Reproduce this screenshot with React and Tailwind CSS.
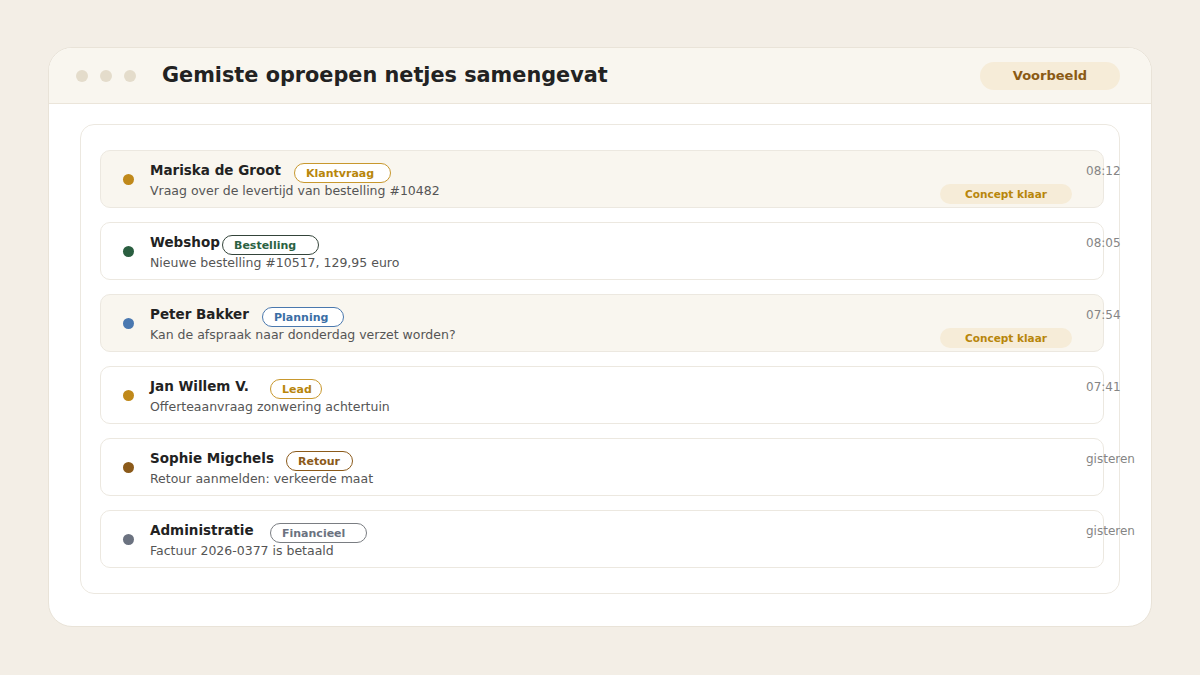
const calls = [
  {
    name: "Mariska de Groot",
    nameW: "w-[144px]",
    tag: "Klantvraag",
    tagW: "w-[97px]",
    tagCls: "border-[#c8982e] text-[#b8860b]",
    dot: "bg-[#c0891a]",
    text: "Vraag over de levertijd van bestelling #10482",
    time: "08:12",
    concept: true,
  },
  {
    name: "Webshop",
    nameW: "w-[72px]",
    tag: "Bestelling",
    tagW: "w-[97px]",
    tagCls: "border-[#34443a] text-[#2b6142]",
    dot: "bg-[#2a5e40]",
    text: "Nieuwe bestelling #10517, 129,95 euro",
    time: "08:05",
  },
  {
    name: "Peter Bakker",
    nameW: "w-[112px]",
    tag: "Planning",
    tagW: "w-[82px]",
    tagCls: "border-[#4a78ae] text-[#3a6ea5]",
    dot: "bg-[#4a78b0]",
    text: "Kan de afspraak naar donderdag verzet worden?",
    time: "07:54",
    concept: true,
  },
  {
    name: "Jan Willem V.",
    nameW: "w-[120px]",
    tag: "Lead",
    tagW: "w-[52px]",
    tagCls: "border-[#c8982e] text-[#b8860b]",
    dot: "bg-[#c0891a]",
    text: "Offerteaanvraag zonwering achtertuin",
    time: "07:41",
  },
  {
    name: "Sophie Migchels",
    nameW: "w-[136px]",
    tag: "Retour",
    tagW: "w-[67px]",
    tagCls: "border-[#8b5a1a] text-[#8b5a1a]",
    dot: "bg-[#8b5a1a]",
    text: "Retour aanmelden: verkeerde maat",
    time: "gisteren",
  },
  {
    name: "Administratie",
    nameW: "w-[120px]",
    tag: "Financieel",
    tagW: "w-[97px]",
    tagCls: "border-[#7a7d82] text-[#6b7280]",
    dot: "bg-[#6b7280]",
    text: "Factuur 2026-0377 is betaald",
    time: "gisteren",
  },
];

function CallRow({ call }) {
  return (
    <div
      className={`flex h-[58px] rounded-[10px] border border-[#ece8e0] pl-[22px] pr-[17px] ${
        call.concept ? "bg-[#f9f6ef]" : "bg-white"
      }`}
    >
      <span className={`self-center w-[11px] h-[11px] rounded-full shrink-0 ${call.dot}`} />
      <div className="flex-1 pl-[16px] pt-[11px]">
        <div className="flex items-start">
          <span className={`${call.nameW} shrink-0 whitespace-nowrap text-[13.5px] leading-[16px] font-bold text-[#222]`}>
            {call.name}
          </span>
          <span
            className={`${call.tagW} h-[20px] mt-[1px] rounded-full border bg-white pl-[11px] text-[11px] font-bold leading-[19px] ${call.tagCls}`}
          >
            {call.tag}
          </span>
        </div>
        <div className="text-[12.5px] leading-[16px] text-[#555]">{call.text}</div>
      </div>
      {call.concept && (
        <div className="self-end mb-[3px] w-[132px] h-[20px] rounded-full bg-[#f6ecd8] text-center text-[10.5px] font-bold leading-[20px] text-[#b8860b]">
          Concept klaar
        </div>
      )}
      <div className="w-0 ml-[14px] pt-[12px] whitespace-nowrap text-[12px] leading-[16px] text-[#858585]">
        {call.time}
      </div>
    </div>
  );
}

export default function App() {
  return (
    <div
      className="w-[1200px] h-[675px] bg-[#f3eee6] pt-[47px] px-[48px]"
      style={{ fontFamily: '"DejaVu Sans", sans-serif' }}
    >
      <div className="h-[580px] rounded-[24px] border border-[#e9e3d8] bg-white overflow-hidden">
        <div className="h-[56px] flex items-center bg-[#f9f6ef] border-b border-[#ebe5da] pl-[27px] pr-[31px]">
          <div className="flex gap-[12px]">
            <span className="w-[12px] h-[12px] rounded-full bg-[#e4dccb]" />
            <span className="w-[12px] h-[12px] rounded-full bg-[#e4dccb]" />
            <span className="w-[12px] h-[12px] rounded-full bg-[#e4dccb]" />
          </div>
          <h1 className="ml-[26px] mt-[1px] text-[20.8px] font-bold text-[#222] flex-1">
            Gemiste oproepen netjes samengevat
          </h1>
          <div className="w-[140px] h-[28px] rounded-full bg-[#f6ecd8] text-center text-[13px] font-bold leading-[28px] text-[#8a5a14]">
            Voorbeeld
          </div>
        </div>
        <div className="pt-[20px] px-[31px]">
          <div className="h-[470px] rounded-[14px] border border-[#ece8e0] pt-[25px] pl-[19px] pr-[15px] flex flex-col gap-[14px]">
            {calls.map((call) => (
              <CallRow key={call.name} call={call} />
            ))}
          </div>
        </div>
      </div>
    </div>
  );
}
